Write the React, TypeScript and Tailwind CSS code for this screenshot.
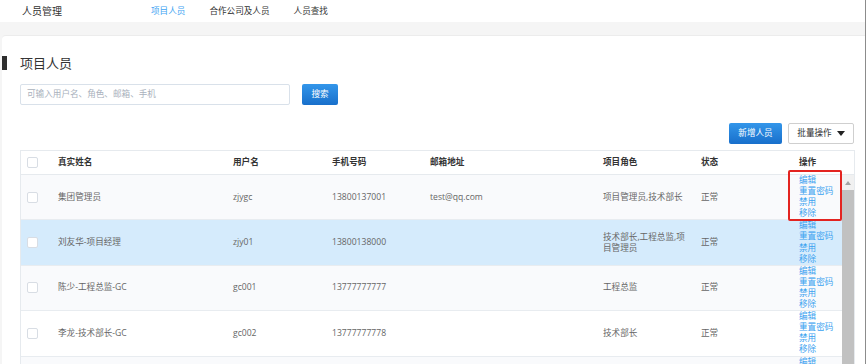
import React from "react";

type Row = {
  name: string;
  user: string;
  phone: string;
  email: string;
  role: string;
  status: string;
  bg: string;
};

const rows: Row[] = [
  { name: "集团管理员", user: "zjygc", phone: "13800137001", email: "test@qq.com", role: "项目管理员,技术部长", status: "正常", bg: "bg-[#f9fafc]" },
  { name: "刘友华-项目经理", user: "zjy01", phone: "13800138000", email: "", role: "技术部长,工程总监,项目管理员", status: "正常", bg: "bg-[#d5ebfc]" },
  { name: "陈少-工程总监-GC", user: "gc001", phone: "13777777777", email: "", role: "工程总监", status: "正常", bg: "bg-[#f9fafc]" },
  { name: "李龙-技术部长-GC", user: "gc002", phone: "13777777778", email: "", role: "技术部长", status: "正常", bg: "bg-white" },
  { name: "", user: "", phone: "", email: "", role: "", status: "", bg: "bg-[#f9fafc]" },
];

function Checkbox() {
  return <div className="w-[11px] h-[11px] rounded-[2px] border border-[#d8dde4] bg-white" />;
}

export default function App() {
  return (
    <div
      className="w-[866px] h-[364px] overflow-hidden bg-[#f5f5f5] border-r border-[#8c8c8c] flex flex-col text-[#333]"
      style={{ fontFamily: '"Open Sans", "Noto Sans CJK SC", sans-serif' }}
    >
      {/* top nav */}
      <div className="h-[22px] shrink-0 bg-white flex items-center">
        <div className="ml-[22px] w-[129px] text-[10px] text-[#333]">人员管理</div>
        <div className="flex items-center gap-[24px] text-[8.6px]">
          <span className="text-[#3ea4f2]">项目人员</span>
          <span className="text-[#333]">合作公司及人员</span>
          <span className="text-[#333]">人员查找</span>
        </div>
      </div>
      <div className="h-[13px] shrink-0 bg-[#f5f5f5]" />

      {/* card */}
      <div className="ml-[2px] flex-1 bg-white rounded-tl-[4px] border-t border-[#ececec] flex flex-col">
        <div className="mt-[20px] flex items-center h-[14px]">
          <div className="w-[5px] h-[14px] bg-[#2e2e2e]" />
          <div className="ml-[13px] text-[13px] leading-[14px] text-[#333]">项目人员</div>
        </div>

        <div className="pl-[18px] pr-[10px] flex flex-col">
          {/* search */}
          <div className="mt-[14px] flex items-center gap-[12px]">
            <div className="w-[270px] h-[21px] rounded-[2px] border border-[#d9e1ea] flex items-center pl-[6px] text-[8.6px] text-[#a9b1bc]">
              可输入用户名、角色、邮箱、手机
            </div>
            <div className="w-[36px] h-[21px] rounded-[2px] bg-gradient-to-b from-[#3396ea] to-[#186fcb] text-white text-[8.6px] flex items-center justify-center">
              搜索
            </div>
          </div>

          {/* action buttons */}
          <div className="mt-[18px] flex justify-end gap-[6px] pr-[1px]">
            <div className="w-[53px] h-[21px] rounded-[2px] bg-gradient-to-b from-[#3396ea] to-[#186fcb] text-white text-[8.6px] flex items-center justify-center">
              新增人员
            </div>
            <div className="w-[66px] h-[21px] rounded-[2px] border border-[#cfcfcf] bg-white text-[#333] text-[8.6px] flex items-center justify-center gap-[5px]">
              <span>批量操作</span>
              <svg width="8" height="5" viewBox="0 0 8 5"><path d="M0 0 H8 L4 5 Z" fill="#222" /></svg>
            </div>
          </div>

          {/* table */}
          <div className="relative mt-[6px] w-[835px] border-l border-t border-r border-[#e6eaee]">
            {/* header */}
            <div className="flex items-center h-[24px] border-b border-[#e6eaee] bg-white text-[8.6px] font-bold text-[#333]">
              <div className="w-[37px] pl-[6px] flex items-center"><Checkbox /></div>
              <div className="w-[175px]">真实姓名</div>
              <div className="w-[99px]">用户名</div>
              <div className="w-[98px]">手机号码</div>
              <div className="w-[173px]">邮箱地址</div>
              <div className="w-[98px]">项目角色</div>
              <div className="w-[98px]">状态</div>
              <div className="flex-1">操作</div>
            </div>
            <div className="flex">
              <div className="flex-1 flex flex-col">
                {rows.map((r, i) => (
                  <div key={i} className={`flex items-center border-b border-[#e8ecf0] ${r.bg} text-[8.6px] text-[#666]`}>
                    <div className="w-[37px] pl-[6px] flex items-center">{r.name ? <Checkbox /> : null}</div>
                    <div className="w-[175px]">{r.name}</div>
                    <div className="w-[99px]">{r.user}</div>
                    <div className="w-[98px]">{r.phone}</div>
                    <div className="w-[173px]">{r.email}</div>
                    <div className="w-[98px] pr-[8px] leading-[11px]">{r.role}</div>
                    <div className="w-[98px]">{r.status}</div>
                    <div className="flex-1 flex flex-col leading-[11.1px] text-[#3ba2f0] text-[8.6px]">
                      <span>编辑</span>
                      <span>重置密码</span>
                      <span>禁用</span>
                      <span>移除</span>
                    </div>
                  </div>
                ))}
              </div>
              {/* scrollbar */}
              <div className="w-[12px] flex flex-col bg-[#f1f1f1]">
                <div className="h-[15px] flex items-center justify-center">
                  <svg width="6" height="4" viewBox="0 0 6 4"><path d="M0 4 L3 0 L6 4 Z" fill="#a3a3a3" /></svg>
                </div>
                <div className="flex-1 bg-[#c1c1c1]" />
              </div>
            </div>
            {/* highlight box */}
            <div className="absolute left-[767px] top-[19px] w-[54px] h-[51px] border-2 border-[#e32420] rounded-[2px] pointer-events-none" />
          </div>
        </div>
      </div>
    </div>
  );
}
